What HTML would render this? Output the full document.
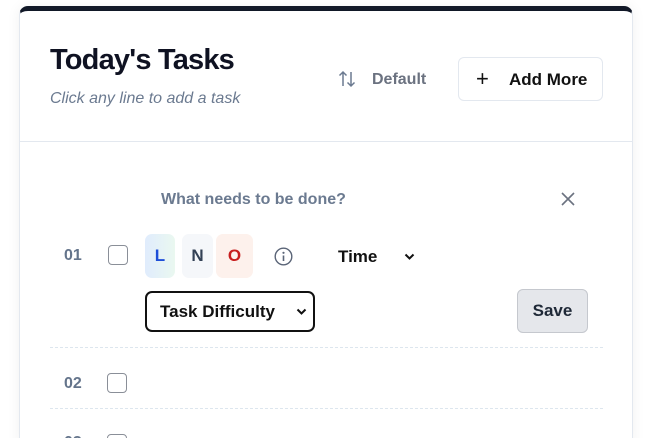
<!DOCTYPE html>
<html><head><style>
*{margin:0;padding:0;box-sizing:border-box}
html,body{width:659px;height:438px;overflow:hidden}
body{background:#fff;position:relative;font-family:"Liberation Sans",sans-serif}
.card{position:absolute;left:19px;top:6px;width:614px;height:440px;background:#fff;border:1px solid #e3e8ef;border-top:5px solid #111827;border-radius:9px 9px 0 0;box-shadow:0 0 14px rgba(0,0,0,.06)}
.a{position:absolute;white-space:nowrap}
.hr{position:absolute;left:19px;width:614px;top:141px;height:1px;background:#e3e8ef}
.dash{position:absolute;left:50px;width:553px;height:0;border-top:1px dashed #dde6ee}
.cb{position:absolute;width:20px;height:20px;border:1.5px solid #8a8f98;border-radius:4px;background:#fff}
.num{font-weight:bold;font-size:16px;color:#64748b}
.pill{position:absolute;top:234px;height:44px;border-radius:7px;font-weight:bold;font-size:17px;text-align:center;line-height:44px}
</style></head><body>
<div class="card"></div>
<div class="a" style="left:50px;top:44px;font-size:29px;font-weight:bold;color:#0f1222;letter-spacing:-0.8px">Today's Tasks</div>
<div class="a" style="left:50px;top:90px;font-size:16px;font-style:italic;color:#6b7a90">Click any line to add a task</div>
<svg class="a" style="left:338px;top:70px" width="18" height="18" viewBox="0 0 18 18"><path d="M5 16V2M1.5 5.5L5 2L8.5 5.5M13 2V16M9.5 12.5L13 16L16.5 12.5" fill="none" stroke="#6b7a90" stroke-width="1.5"/></svg>
<div class="a" style="left:372px;top:71px;font-size:16px;font-weight:bold;color:#6b7280">Default</div>
<div class="a" style="left:458px;top:57px;width:145px;height:44px;border:1px solid #e3e8ef;border-radius:6px"></div>
<div class="a" style="left:476px;top:66px;font-size:22px;color:#111">+</div>
<div class="a" style="left:509px;top:70px;font-size:17px;font-weight:bold;color:#111">Add More</div>
<div class="hr"></div>
<div class="a" style="left:161px;top:191px;font-size:16px;font-weight:bold;color:#6b7a90">What needs to be done?</div>
<svg class="a" style="left:561px;top:192px" width="14" height="14" viewBox="0 0 14 14"><path d="M1 1L13 13M13 1L1 13" stroke="#6b7280" stroke-width="1.6"/></svg>
<div class="a num" style="left:64px;top:247px">01</div>
<div class="cb" style="left:108px;top:245px"></div>
<div class="pill" style="left:145px;width:30px;background:linear-gradient(90deg,#e0ecfd,#eaf8f0);color:#1d4ed8">L</div>
<div class="pill" style="left:182px;width:31px;background:#f5f7fa;color:#334155">N</div>
<div class="pill" style="left:216px;width:37px;background:#fdf1ec;color:#c81e1e">O</div>
<svg class="a" style="left:274px;top:247px" width="19" height="19" viewBox="0 0 19 19"><circle cx="9.5" cy="9.5" r="8.3" fill="none" stroke="#5b6578" stroke-width="1.4"/><circle cx="9.5" cy="5.8" r="1.1" fill="#5b6578"/><path d="M9.5 8.5V14" stroke="#5b6578" stroke-width="1.6"/></svg>
<div class="a" style="left:338px;top:247px;font-size:17px;font-weight:bold;color:#111">Time</div>
<svg class="a" style="left:404px;top:253px" width="11" height="8" viewBox="0 0 11 8"><path d="M1.5 1.5L5.5 5.5L9.5 1.5" fill="none" stroke="#111" stroke-width="2"/></svg>
<div class="a" style="left:145px;top:291px;width:170px;height:41px;border:2px solid #111;border-radius:7px"></div>
<div class="a" style="left:160px;top:302px;font-size:17px;font-weight:bold;color:#111">Task Difficulty</div>
<svg class="a" style="left:296px;top:308px" width="11" height="8" viewBox="0 0 11 8"><path d="M1.5 1.5L5.5 5.5L9.5 1.5" fill="none" stroke="#111" stroke-width="2"/></svg>
<div class="a" style="left:517px;top:289px;width:71px;height:44px;background:#e5e7eb;border:1px solid #c5c8ce;border-radius:6px;text-align:center;line-height:42px;font-size:17px;font-weight:bold;color:#1f2937">Save</div>
<div class="dash" style="top:347px"></div>
<div class="a num" style="left:64px;top:375px">02</div>
<div class="cb" style="left:107px;top:373px"></div>
<div class="dash" style="top:408px"></div>
<div class="a num" style="left:64px;top:434px">03</div>
<div class="cb" style="left:107px;top:434px"></div>
</body></html>
